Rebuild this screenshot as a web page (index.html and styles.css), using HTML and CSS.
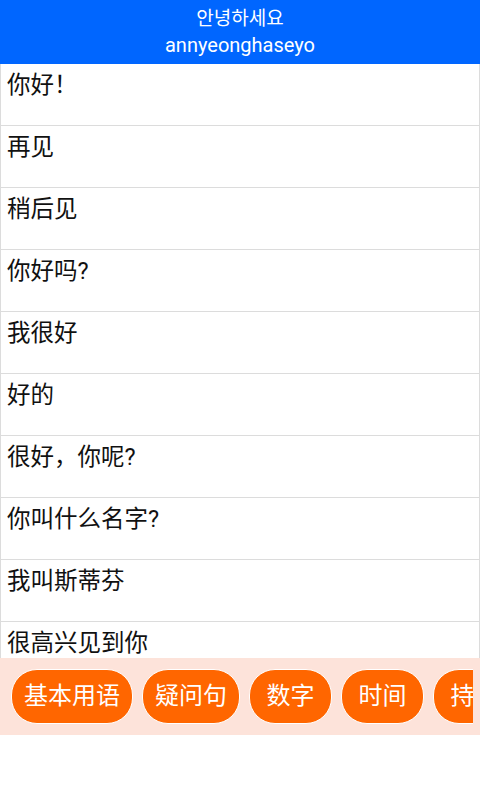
FILE: index.html
```html
<!DOCTYPE html>
<html lang="zh">
<head>
<meta charset="utf-8">
<link rel="stylesheet" href="styles.css">
</head>
<body>
<div class="app">
  <header class="header">
    <div class="ko">안녕하세요</div>
    <div class="roman">annyeonghaseyo</div>
  </header>
  <ul class="list">
    <li class="row">你好！</li>
    <li class="row">再见</li>
    <li class="row">稍后见</li>
    <li class="row">你好吗?</li>
    <li class="row">我很好</li>
    <li class="row">好的</li>
    <li class="row">很好，你呢?</li>
    <li class="row">你叫什么名字?</li>
    <li class="row">我叫斯蒂芬</li>
    <li class="row">很高兴见到你</li>
  </ul>
  <nav class="tabs">
    <div class="scroller">
      <span class="tab">基本用语</span>
      <span class="tab">疑问句</span>
      <span class="tab">数字</span>
      <span class="tab">时间</span>
      <span class="tab">持续</span>
    </div>
  </nav>
</div>
</body>
</html>
```
FILE: styles.css
```css
* { box-sizing: border-box; }
html, body { margin: 0; padding: 0; background: #fff; }
body { font-family: Roboto, "Noto Sans CJK SC", sans-serif; }
.app { width: 480px; height: 800px; display: flex; flex-direction: column; }
.header {
  height: 64px;
  background: #0066ff;
  color: #fff;
  text-align: center;
  padding-top: 5px;
}
.ko { font-family: Roboto, "Noto Sans CJK KR", sans-serif; font-size: 19px; line-height: 27px; }
.roman { font-size: 20px; line-height: 27px; }
.list {
  list-style: none;
  margin: 0;
  padding: 0;
  height: 594px;
  overflow: hidden;
  border-left: 1px solid #dcdcdc;
  border-right: 1px solid #dcdcdc;
}
.row {
  height: 62px;
  border-bottom: 1px solid #dcdcdc;
  padding: 5px 6px 0;
  font-size: 23.5px;
  line-height: 32px;
  color: #111;
}
.tabs {
  height: 77px;
  background: #fde3da;
  padding: 11px 7px 11px 11px;
}
.scroller {
  display: flex;
  gap: 9px;
  overflow: hidden;
  height: 55px;
}
.tab {
  flex: none;
  height: 55px;
  min-width: 83px;
  padding: 0 12px;
  border: 1px solid #fff;
  border-radius: 26px;
  background: #ff6600;
  color: #fff;
  font-size: 24px;
  line-height: 53px;
  text-align: center;
}
```
